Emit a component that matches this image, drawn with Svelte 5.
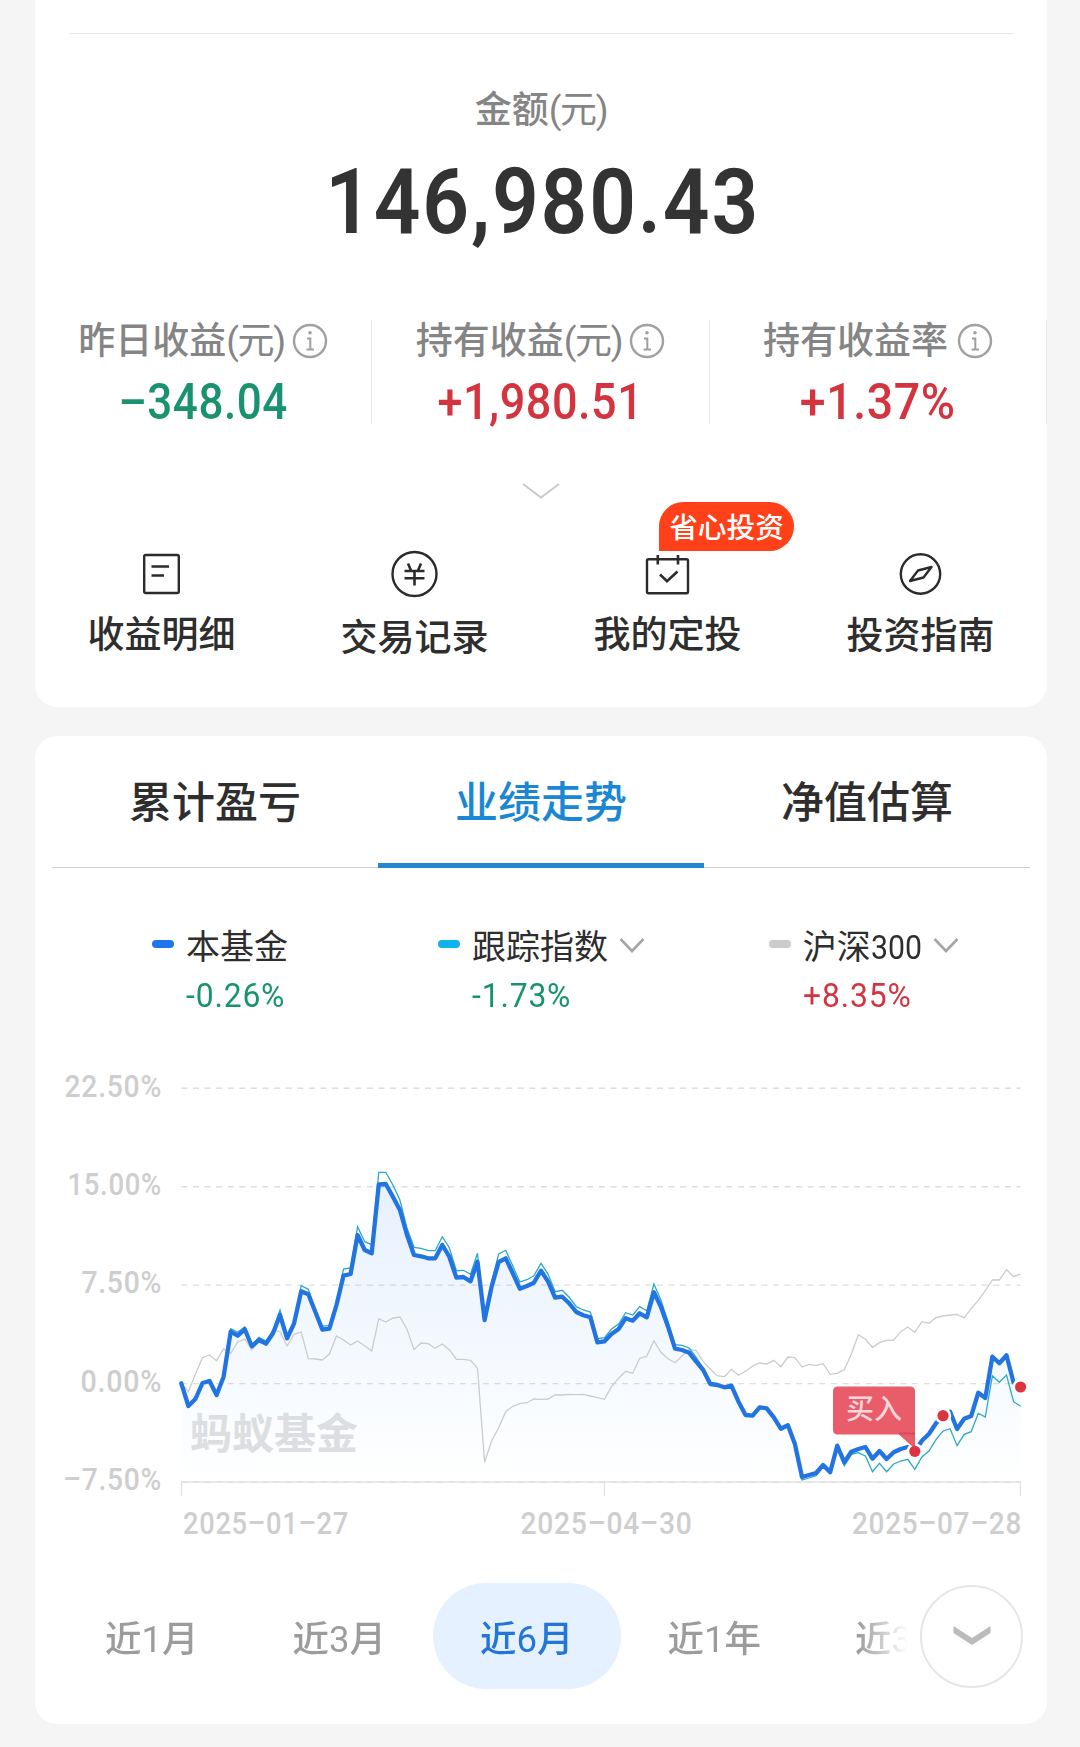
<script>
  const stats = [
    { id: "yesterday", title: "昨日收益", unit: "(元)", value: "–348.04", dir: "down" },
    { id: "holding", title: "持有收益", unit: "(元)", value: "+1,980.51", dir: "up" },
    { id: "rate", title: "持有收益率", unit: "", value: "+1.37%", dir: "up" }
  ];

  const actions = [
    { id: "detail", title: "收益明细" },
    { id: "record", title: "交易记录" },
    { id: "plan", title: "我的定投", badge: "省心投资" },
    { id: "guide", title: "投资指南" }
  ];

  const legends = [
    { id: "fund", name: "本基金", digits: "", value: "-0.26%", dir: "down", more: false },
    { id: "index", name: "跟踪指数", digits: "", value: "-1.73%", dir: "down", more: true },
    { id: "hs300", name: "沪深", digits: "300", value: "+8.35%", dir: "up", more: true }
  ];

  const ranges = [
    { id: "m1", n: "1", unit: "月" },
    { id: "m3", n: "3", unit: "月" },
    { id: "m6", n: "6", unit: "月" },
    { id: "y1", n: "1", unit: "年" },
    { id: "y3", n: "3", unit: "年" }
  ];

  let tabs = ["累计盈亏", "业绩走势", "净值估算"];
  let tab = $state("业绩走势");
  let range = $state("m6");

  // one sample per trading day, in thirds of a pixel from the top of the chart
  const fund = [1030,1098,1077,1029,1023,1065,1010,875,887,868,919,900,911,880,825,895,850,754,763,815,869,866,795,707,702,585,630,640,433,432,470,510,585,645,649,655,655,615,650,713,711,724,665,840,740,666,655,700,746,738,728,692,725,773,770,790,816,826,832,907,904,882,867,835,842,820,832,757,800,860,926,930,938,965,990,1032,1035,1042,1037,1085,1125,1127,1102,1105,1132,1166,1156,1212,1311,1305,1299,1275,1297,1217,1267,1235,1227,1221,1256,1233,1257,1237,1227,1221,1234,1202,1182,1150,1127,1115,1167,1136,1128,1058,1074,950,970,946,1028,1041];
  const index = [1030,1098,1077,1029,1023,1065,1008,866,877,860,915,892,903,872,810,888,845,737,748,810,858,857,790,687,684,560,605,614,397,397,435,480,565,622,625,632,632,590,623,692,691,703,640,838,725,642,631,678,726,719,707,670,703,755,751,772,800,810,816,896,893,867,852,818,825,800,812,732,780,845,914,916,924,952,985,1028,1033,1040,1035,1083,1123,1126,1100,1104,1131,1166,1156,1213,1320,1314,1307,1280,1300,1222,1277,1243,1238,1248,1295,1270,1295,1272,1263,1258,1288,1251,1233,1199,1173,1166,1217,1183,1175,1120,1131,1007,1027,1005,1085,1099];
  const hs300 = [1030,1055,1003,953,945,962,926,940,906,897,930,905,912,870,875,918,883,876,956,957,960,942,888,900,915,903,917,933,836,846,834,831,868,929,909,911,925,912,929,958,958,961,985,1267,1203,1163,1115,1099,1091,1088,1077,1078,1077,1065,1065,1063,1064,1063,1068,1073,1078,1040,1015,994,1000,955,949,902,937,956,968,948,928,932,965,988,1007,1010,988,1006,994,978,969,972,961,980,951,953,981,973,976,971,1003,1000,989,942,884,898,922,908,901,900,875,861,877,845,850,833,828,825,823,834,806,781,752,720,720,689,710,702];

  const left = 146.3;
  const step = 7.053;
  const toPath = (list) => list.map((v, i) => (i ? "L" : "M") + (left + i * step).toFixed(1) + " " + (v / 3).toFixed(1)).join("");
  const area = toPath(fund) + "L985.6 442L146.3 442Z";

  const yAxis = [
    { text: "22.50%", y: 48.3, w: 97.5 },
    { text: "15.00%", y: 146.7, w: 94.5 },
    { text: "7.50%", y: 245.1, w: 80.5 },
    { text: "0.00%", y: 343.6, w: 81.5 },
    { text: "–7.50%", y: 442, w: 99 }
  ];
  const xAxis = [
    { text: "2025–01–27", x: 148, w: 166 },
    { text: "2025–04–30", x: 485.5, w: 172 },
    { text: "2025–07–28", x: 817, w: 170 }
  ];
  const buys = [104, 108, 119];
</script>

<main>
  <section class="card summary">
    <div class="rule"></div>
    <div class="label amount-label">金额<span class="unit">(元)</span></div>
    <div class="amount"><span>146,980.43</span></div>

    <div class="stats">
      {#each stats as s (s.id)}
        <div class="stat">
          <div class="label">
            <div>{s.title}{#if s.unit}<span class="unit">{s.unit}</span>{/if}</div>
            <svg width="36" height="36" viewBox="0 0 36 36" fill="none" stroke="#a0a0a0" stroke-width="2.4">
              <circle cx="18" cy="18" r="16" />
              <path d="M15 15.5H18.3V26M14.5 26.6H22" stroke-width="2" />
              <circle cx="18" cy="9.8" r="1.8" fill="#a0a0a0" stroke="none" />
            </svg>
          </div>
          <div class="value {s.dir}"><span>{s.value}</span></div>
        </div>
      {/each}
    </div>

    <svg class="expand" width="40" height="20" viewBox="0 0 40 20" fill="none" stroke="#c8c8c8" stroke-width="1.8">
      <path d="M2 3L20 16.5L38 3" />
    </svg>

    <div class="actions">
      {#each actions as a (a.id)}
        <div class="action {a.id}">
          <svg width="50" height="50" viewBox="0 0 50 50" fill="none" stroke="#2b2b2b" stroke-width="2.4">
            {#if a.id == "detail"}
              <rect x="7.2" y="6" width="34.6" height="38" rx="1.5" />
              <path d="M14.5 17.6H32M14.5 26.5H27" stroke-width="2.5" />
            {:else if a.id == "record"}
              <circle cx="24.5" cy="25" r="22" />
              <path d="M18 14.5L21 21.5M31 14.5L28 21.5M14.5 22H34.5M14.5 29.3H34.5M24.5 22V36.5" stroke-width="2.6" />
            {:else if a.id == "plan"}
              <rect x="4" y="10.2" width="41" height="34" rx="1.5" />
              <path d="M14.8 6V15.5M35 6V15.5" stroke-width="2.6" />
              <path d="M17 25.5L24 32.2L34.5 22.5" stroke-width="2.6" />
            {:else}
              <circle cx="24.5" cy="25" r="19.7" />
              <path d="M14 32L22 21.5L35.5 18L27.5 28.5Z" stroke-linejoin="round" />
            {/if}
          </svg>
          <div class="action-title">{a.title}</div>
          {#if a.badge}<div class="badge">{a.badge}</div>{/if}
        </div>
      {/each}
    </div>
  </section>

  <section class="card trend">
    <div class="tabs">
      {#each tabs as t}
        <a class:active={t == tab} onclick={() => (tab = t)}>{t}</a>
      {/each}
    </div>

    <div class="legends">
      {#each legends as l (l.id)}
        <div class="legend">
          <i class="dash {l.id}"></i>
          <div>
            <div class="legend-name">
              {l.name}{#if l.digits}<span class="digits">{l.digits}</span>{/if}
              {#if l.more}
                <svg width="26" height="18" viewBox="0 0 26 18" fill="none" stroke="#a6a6a6" stroke-width="2.6"><path d="M1.5 2L13 14L24.5 2" /></svg>
              {/if}
            </div>
            <div class="legend-value {l.dir}"><span>{l.value}</span></div>
          </div>
        </div>
      {/each}
    </div>

    <svg class="chart" width="1012" height="510" viewBox="0 0 1012 510">
      <defs>
        <linearGradient id="fill" gradientUnits="userSpaceOnUse" x1="0" y1="144" x2="0" y2="442">
          <stop offset="0" stop-color="#1f75f0" stop-opacity="0.11" />
          <stop offset="1" stop-color="#1f8af0" stop-opacity="0" />
        </linearGradient>
      </defs>
      {#each yAxis as t}
        <line x1="146.3" x2="985.6" y1={t.y} y2={t.y} stroke="#dedede" stroke-width="1.4" stroke-dasharray="6 5.6" />
        <text x={127 - t.w} y={t.y + 8.2} textLength={t.w} lengthAdjust="spacingAndGlyphs">{t.text}</text>
      {/each}
      <path d="M146.5 456V442H985.5V456M569.5 442V456" fill="none" stroke="#e2e2e2" stroke-width="1.3" />
      {#each xAxis as t}
        <text x={t.x} y="494" textLength={t.w} lengthAdjust="spacingAndGlyphs">{t.text}</text>
      {/each}
      <path d={area} fill="url(#fill)" />
      <text class="watermark" x="155" y="409">蚂蚁基金</text>
      <path d={toPath(hs300)} fill="none" stroke="#ccc" stroke-width="1.3" />
      <path d={toPath(index)} fill="none" stroke="#2aa9c4" stroke-width="1.3" />
      <path d={toPath(fund)} fill="none" stroke="#2274e2" stroke-width="4.3" stroke-linejoin="round" stroke-linecap="round" />
      {#each buys as b}
        <circle cx={left + b * step} cy={fund[b] / 3} r="8.2" fill="#fff" />
      {/each}
      <path d="M803 346.5H875Q880 346.5 880 351.5V409L864 394.5H803Q798 394.5 798 389.5V351.5Q798 346.5 803 346.5Z" fill="#e95c69" />
      <path d="M864 392.5H880V394.5H864Z" fill="#db4653" />
      <text class="buy" x="811" y="379">买入</text>
      {#each buys as b}
        <circle cx={left + b * step} cy={fund[b] / 3} r="5.6" fill="#dc3340" />
      {/each}
    </svg>

    <div class="ranges">
      <div class="range-list">
        {#each ranges as r (r.id)}
          <a class:active={r.id == range} onclick={() => (range = r.id)}>近<span>{r.n}</span>{r.unit}</a>
        {/each}
      </div>
      <div class="more">
        <svg width="40" height="24" viewBox="0 0 40 24"><path d="M1.5 2L20 14L38.5 2V9L20 21L1.5 9Z" fill="#bbb" /></svg>
      </div>
    </div>
  </section>
</main>

<style>
  :global(body) {
    background: #f5f5f5;
  }

  main {
    width: 1080px;
    height: 1747px;
    overflow: hidden;
    box-sizing: border-box;
    padding: 0 33px 0 35px;
    font-family: Roboto, "Noto Sans CJK SC", sans-serif;
    color: #2e2e2e;
  }

  .card {
    background: #fff;
    box-sizing: border-box;
    overflow: hidden;
  }

  .summary {
    height: 707px;
    padding-top: 33px;
    border-radius: 0 0 22px 22px;
  }

  .rule {
    height: 1px;
    margin: 0 34px 0 35px;
    background: #e8e8e8;
  }

  .label {
    font-size: 37px;
    line-height: 44px;
    font-weight: 500;
    color: #858585;
    white-space: nowrap;
  }

  .unit {
    font-weight: 400;
    letter-spacing: -1.3px;
  }

  .amount-label {
    margin-top: 55px;
    text-align: center;
  }

  .amount {
    margin-top: 16px;
    height: 106px;
    line-height: 107px;
    padding-left: 4px;
    text-align: center;
    font-size: 91px;
    font-weight: 600;
    letter-spacing: 2px;
    color: #333;
  }

  .amount span,
  .value span {
    display: inline-block;
    transform: scaleX(0.9);
  }

  .stats {
    display: grid;
    grid-template-columns: 337px 338px 337px;
    margin-top: 65px;
    height: 104px;
  }

  .stat {
    border-right: 1px solid #e8e8e8;
    text-align: center;
  }

  .stat .label {
    display: flex;
    justify-content: center;
    align-items: center;
    gap: 7px;
    height: 42px;
  }

  .stat .label div {
    padding-top: 1px;
  }

  .stat:last-child .label {
    gap: 9px;
  }

  .value {
    margin-top: 19px;
    font-size: 50px;
    line-height: 43px;
    font-weight: 550;
    letter-spacing: 0.6px;
  }

  .stat:first-child .value span {
    transform: scaleX(0.88);
  }

  .stat:last-child .value span {
    transform: scaleX(0.93);
  }

  .up {
    color: #d43440;
  }

  .down {
    color: #19936f;
  }

  .expand {
    display: block;
    margin: 57px auto 0;
  }

  .actions {
    display: grid;
    grid-template-columns: repeat(4, 253px);
    margin-top: 48px;
  }

  .action {
    position: relative;
    display: flex;
    flex-direction: column;
    align-items: center;
  }

  .action-title {
    margin-top: 13px;
    font-size: 37px;
    line-height: 48px;
    font-weight: 500;
  }

  .record .action-title {
    margin-top: 16px;
  }

  .guide .action-title {
    margin-top: 14px;
  }

  .badge {
    position: absolute;
    left: 118px;
    top: -47px;
    width: 135px;
    height: 49px;
    border-radius: 25px 25px 25px 0;
    background: #ff4019;
    color: #fff;
    font-size: 28.7px;
    line-height: 52px;
    font-weight: 500;
    text-align: center;
  }

  .trend {
    margin-top: 29px;
    height: 988px;
    border-radius: 22px;
  }

  .tabs {
    display: grid;
    grid-template-columns: repeat(3, 1fr);
    height: 131px;
    margin: 0 17px;
    border-bottom: 1px solid #d0d0d0;
  }

  .tabs a {
    height: 127px;
    line-height: 134px;
    text-align: center;
    font-size: 43px;
    font-weight: 500;
    border-bottom: 5px solid transparent;
  }

  .tabs a.active {
    color: #1a87d5;
    border-color: #2386d0;
  }

  .legends {
    display: grid;
    grid-template-columns: repeat(3, 1fr);
    margin: 56px 22px 0 23px;
    height: 116px;
  }

  .legend {
    display: flex;
    justify-content: center;
    gap: 12px;
  }

  .legend:first-child {
    padding-left: 4px;
  }

  .dash {
    width: 22px;
    height: 8px;
    margin-top: 16px;
    border-radius: 4px;
    background: #1f75f0;
  }

  .dash.index {
    background: #0fb2ea;
  }

  .dash.hs300 {
    background: #ccc;
  }

  .legend-name {
    display: flex;
    align-items: center;
    font-size: 34px;
    line-height: 46px;
  }

  .legend-name svg {
    margin: -2px 0 0 11px;
  }

  .digits {
    width: 51px;
    transform: scaleX(0.89);
    transform-origin: left;
  }

  .legend-value {
    margin-top: 4px;
    font-size: 33.5px;
    line-height: 44px;
    letter-spacing: 0.9px;
  }

  .legend-value span {
    display: inline-block;
    transform: scaleX(0.95);
    transform-origin: left;
  }

  .chart {
    display: block;
  }

  .chart text {
    font-size: 31.5px;
    font-weight: 500;
    letter-spacing: 0.8px;
    fill: #cecece;
  }

  .chart .watermark {
    font-size: 42px;
    font-weight: 700;
    letter-spacing: 0;
    fill: #dcdee1;
  }

  .chart .buy {
    font-size: 28px;
    font-weight: 500;
    letter-spacing: 0;
    fill: #fcd6d9;
  }

  .ranges {
    display: flex;
    align-items: center;
    margin: 33px 24px 0 23px;
    height: 106px;
  }

  .range-list {
    display: flex;
    width: 853px;
    overflow: hidden;
    -webkit-mask-image: linear-gradient(to right, #000 800px, transparent 850px);
    mask-image: linear-gradient(to right, #000 800px, transparent 850px);
  }

  .range-list a {
    flex: none;
    width: 187.5px;
    height: 106px;
    line-height: 113px;
    border-radius: 53px;
    text-align: center;
    font-size: 36.5px;
    font-weight: 500;
    color: #9c9c9c;
  }

  .range-list a span {
    font-weight: 400;
  }

  .range-list a.active {
    background: #e6f1ff;
    color: #2475d8;
  }

  .more {
    flex: none;
    display: flex;
    align-items: center;
    justify-content: center;
    box-sizing: border-box;
    width: 103px;
    height: 103px;
    margin-left: 10px;
    border: 2px solid #e6e6e6;
    border-radius: 50%;
  }
</style>
